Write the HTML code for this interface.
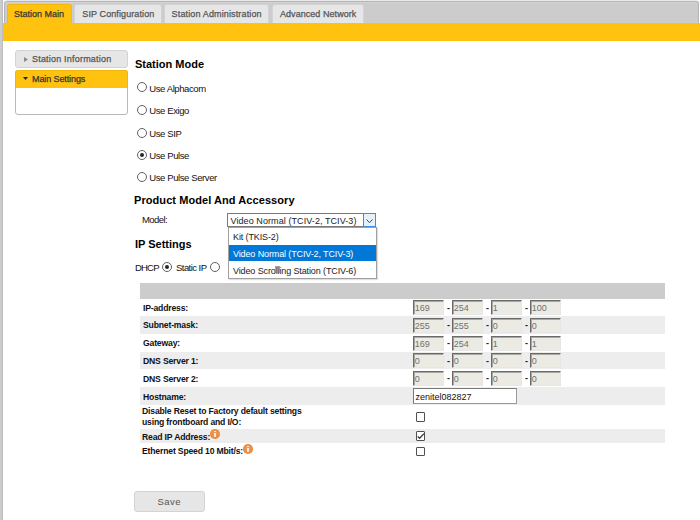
<!DOCTYPE html>
<html><head><meta charset="utf-8">
<style>
*{box-sizing:border-box;margin:0;padding:0}
html,body{width:700px;height:520px;overflow:hidden;background:#fff}
body{position:relative;font-family:"Liberation Sans",sans-serif;color:#222}
.a{position:absolute;white-space:nowrap}
#lbar{left:0;top:0;width:3px;height:520px;background:#cccccc;border-right:1px solid #bdbdbd}
#nav{left:3px;top:0;width:697px;height:24px;background:#fff;border-radius:4px 4px 0 0;box-shadow:inset 0 1px 0 #e9e9e9}
#navin{left:4px;top:1px;width:695px;height:23px;background:#cccccc;border:1px solid #b5b5b5;border-bottom:none;border-radius:3px 3px 0 0;box-shadow:inset 0 1px 0 #d3d3d3}
#nav2{left:698px;top:0;width:2px;height:24px;background:#fff}
#ybar{left:3px;top:23px;width:697px;height:18px;background:#ffc20e}
.tab{top:4px;height:19px;background:#e6e6e6;border:1px solid #d3d3d3;border-bottom:none;border-radius:3px 3px 0 0}
.tab.act{background:#ffc20e;border-color:#f2b90c}
.tt{position:absolute;font-size:9px;color:#555;white-space:nowrap;-webkit-text-stroke:0.25px currentColor}
.acc1{left:15px;top:50px;width:113px;height:18px;background:#e6e6e6;border:1px solid #d3d3d3;border-radius:3px}
.acc2{left:15px;top:70px;width:113px;height:45px;background:#fff;border:1px solid #b9b9b9;border-radius:3px}
.acc2h{left:15px;top:70px;width:113px;height:18px;background:#ffc20e;border:1px solid #f0b70b;border-bottom:none;border-radius:3px 3px 0 0}
.h2{position:absolute;font-size:11px;font-weight:bold;color:#000;white-space:nowrap}
.rl{position:absolute;font-size:9.5px;letter-spacing:-0.4px;color:#111;white-space:nowrap}
.radio{position:absolute;width:10px;height:10px;border:1px solid #606060;border-radius:50%;background:#fff}
.radio.on::after{content:"";position:absolute;left:1.6px;top:1.6px;width:4.8px;height:4.8px;border-radius:50%;background:#262626}
.sel{position:absolute;left:227px;top:213px;width:149px;height:14px;border:1px solid #7a7a7a;background:#fff}
.selbtn{position:absolute;left:363px;top:213px;width:13px;height:14px;border:1px solid #3c8ee6;background:#e5f1fb}
.dd{position:absolute;left:228px;top:227px;width:149px;height:52px;border:1px solid #a0a0a0;background:#fff;box-shadow:1px 1px 1px rgba(0,0,0,0.12)}
.ddt{position:absolute;font-size:9px;letter-spacing:-0.12px;color:#222;white-space:nowrap}
.hl{position:absolute;left:229px;top:245px;width:147px;height:16px;background:#0078d7}
.tr{position:absolute;left:140px;width:525px}
.g{background:#ededed}
.lb{position:absolute;font-size:9.6px;font-weight:bold;letter-spacing:-0.2px;color:#111;white-space:nowrap;transform:scaleX(0.9);transform-origin:0 0}
.ip{position:absolute;width:31px;height:15px;background:#ebebe4;border:1px solid #e6e6e6;border-top-color:#6a6a6a;border-left-color:#6a6a6a;box-shadow:inset 1px 1px 0 #a8a8a0;font-size:9px;color:#707070;line-height:15.5px;padding-left:0.7px}
.dash{position:absolute;font-size:9px;color:#222;font-weight:bold}
.cb{position:absolute;width:9px;height:9.6px;border:1px solid #505050;border-radius:1px;background:#fff}
.info{position:absolute;width:10px;height:10px;border-radius:50%;background:radial-gradient(circle at 50% 45%,#f0a060 0,#e98a3c 60%,#d9772c 100%)}
.info::after{content:"";position:absolute;left:4.3px;top:3.6px;width:1.4px;height:4.4px;background:#fde9da}
.info::before{content:"";position:absolute;left:4.3px;top:1.7px;width:1.4px;height:1.1px;background:#fde9da}
.save{position:absolute;left:134px;top:491px;width:71px;height:21px;background:#e6e6e6;border:1px solid #d3d3d3;border-radius:3px}
</style></head><body>
<div id="lbar" class="a"></div><div id="nav" class="a"></div><div id="navin" class="a"></div><div id="ybar" class="a"></div>
<div class="a tab act" style="left:7px;width:65px"></div>
<div class="tt" style="left:14.1px;top:9px;color:#363636;letter-spacing:0px">Station Main</div>
<div class="a tab" style="left:74px;width:88px"></div>
<div class="tt" style="left:82.3px;top:9px;color:#555;letter-spacing:0.1px">SIP Configuration</div>
<div class="a tab" style="left:164px;width:105px"></div>
<div class="tt" style="left:171.6px;top:9px;color:#555;letter-spacing:0.14px">Station Administration</div>
<div class="a tab" style="left:272px;width:92px"></div>
<div class="tt" style="left:280px;top:9px;color:#555;letter-spacing:0.05px">Advanced Network</div>
<div class="a acc1"></div><div class="a acc2"></div><div class="a acc2h"></div>
<svg class="a" style="left:24px;top:57px" width="4" height="5" viewBox="0 0 4 5"><path d="M0 0 L4 2.5 L0 5Z" fill="#8a8a8a"/></svg>
<div class="tt" style="left:32px;top:54px;letter-spacing:0.2px;color:#555">Station Information</div>
<svg class="a" style="left:23.2px;top:77.3px" width="5" height="3" viewBox="0 0 5 3"><path d="M0 0 L5 0 L2.5 3Z" fill="#1c2340"/></svg>
<div class="tt" style="left:32px;top:74px;color:#363636;letter-spacing:-0.1px">Main Settings</div>
<div class="h2" style="left:135px;top:58px;">Station Mode</div>
<div class="h2" style="left:134px;top:194px;letter-spacing:0.07px">Product Model And Accessory</div>
<div class="h2" style="left:135px;top:238px;">IP Settings</div>
<div class="radio" style="left:137px;top:82px"></div>
<div class="rl" style="left:149.3px;top:82.5px;">Use Alphacom</div>
<div class="radio" style="left:137px;top:105px"></div>
<div class="rl" style="left:149.3px;top:105px;">Use Exigo</div>
<div class="radio" style="left:137px;top:128px"></div>
<div class="rl" style="left:149.3px;top:128px;">Use SIP</div>
<div class="radio on" style="left:137px;top:150px"></div>
<div class="rl" style="left:149.3px;top:150px;">Use Pulse</div>
<div class="radio" style="left:137px;top:172px"></div>
<div class="rl" style="left:149.3px;top:172px;">Use Pulse Server</div>
<div class="rl" style="left:142px;top:214.3px;letter-spacing:-0.58px">Model:</div>
<div class="sel"></div>
<div class="ddt" style="left:230.5px;top:216px;letter-spacing:0.08px">Video Normal (TCIV-2, TCIV-3)</div>
<div class="selbtn"></div>
<svg class="a" style="left:366px;top:218.5px" width="7" height="4.5" viewBox="0 0 7 4.5"><path d="M0.5 0.5 L3.5 3.7 L6.5 0.5" fill="none" stroke="#444" stroke-width="1"/></svg>
<div class="dd"></div>
<div class="ddt" style="left:233px;top:231.5px;">Kit (TKIS-2)</div>
<div class="hl"></div>
<div class="ddt" style="left:233px;top:248.5px;color:#fff">Video Normal (TCIV-2, TCIV-3)</div>
<div class="ddt" style="left:233px;top:265.5px;">Video Scrolling Station (TCIV-6)</div>
<div class="a" style="left:275.3px;top:266.3px;width:4.5px;height:7px;background:rgba(130,130,145,0.75)"></div>
<div class="rl" style="left:135px;top:261.5px;letter-spacing:-0.8px">DHCP</div>
<div class="radio on" style="left:162px;top:262px"></div>
<div class="rl" style="left:176px;top:261.5px;letter-spacing:-0.55px">Static IP</div>
<div class="radio" style="left:210px;top:262px"></div>
<div class="tr" style="top:283px;height:16px;background:#cccccc"></div>
<div class="tr g" style="top:316px;height:18px"></div>
<div class="tr g" style="top:352px;height:17px"></div>
<div class="tr g" style="top:387px;height:18px"></div>
<div class="tr g" style="top:429px;height:14px"></div>
<div class="lb" style="left:143px;top:301.7px;">IP-address:</div>
<div class="lb" style="left:143px;top:319.2px;">Subnet-mask:</div>
<div class="lb" style="left:143px;top:337.2px;">Gateway:</div>
<div class="lb" style="left:143px;top:354.7px;">DNS Server 1:</div>
<div class="lb" style="left:143px;top:372.7px;">DNS Server 2:</div>
<div class="lb" style="left:143px;top:391.2px;">Hostname:</div>
<div class="lb" style="left:142px;top:405.2px;">Disable Reset to Factory default settings</div>
<div class="lb" style="left:142px;top:416.2px;">using frontboard and I/O:</div>
<div class="lb" style="left:142px;top:430.7px;">Read IP Address:</div>
<div class="lb" style="left:142px;top:445.2px;">Ethernet Speed 10 Mbit/s:</div>
<div class="info" style="left:210px;top:429px"></div>
<div class="info" style="left:243px;top:444.3px"></div>
<div class="ip" style="left:413px;top:300px">169</div>
<div class="dash" style="left:447px;top:302.5px">-</div>
<div class="ip" style="left:452px;top:300px">254</div>
<div class="dash" style="left:486px;top:302.5px">-</div>
<div class="ip" style="left:491px;top:300px">1</div>
<div class="dash" style="left:525px;top:302.5px">-</div>
<div class="ip" style="left:530px;top:300px">100</div>
<div class="ip" style="left:413px;top:317.5px">255</div>
<div class="dash" style="left:447px;top:320.0px">-</div>
<div class="ip" style="left:452px;top:317.5px">255</div>
<div class="dash" style="left:486px;top:320.0px">-</div>
<div class="ip" style="left:491px;top:317.5px">0</div>
<div class="dash" style="left:525px;top:320.0px">-</div>
<div class="ip" style="left:530px;top:317.5px">0</div>
<div class="ip" style="left:413px;top:335.5px">169</div>
<div class="dash" style="left:447px;top:338.0px">-</div>
<div class="ip" style="left:452px;top:335.5px">254</div>
<div class="dash" style="left:486px;top:338.0px">-</div>
<div class="ip" style="left:491px;top:335.5px">1</div>
<div class="dash" style="left:525px;top:338.0px">-</div>
<div class="ip" style="left:530px;top:335.5px">1</div>
<div class="ip" style="left:413px;top:353px">0</div>
<div class="dash" style="left:447px;top:355.5px">-</div>
<div class="ip" style="left:452px;top:353px">0</div>
<div class="dash" style="left:486px;top:355.5px">-</div>
<div class="ip" style="left:491px;top:353px">0</div>
<div class="dash" style="left:525px;top:355.5px">-</div>
<div class="ip" style="left:530px;top:353px">0</div>
<div class="ip" style="left:413px;top:370.5px">0</div>
<div class="dash" style="left:447px;top:373.0px">-</div>
<div class="ip" style="left:452px;top:370.5px">0</div>
<div class="dash" style="left:486px;top:373.0px">-</div>
<div class="ip" style="left:491px;top:370.5px">0</div>
<div class="dash" style="left:525px;top:373.0px">-</div>
<div class="ip" style="left:530px;top:370.5px">0</div>
<div class="a" style="left:413px;top:388px;width:104px;height:16px;border:1px solid #7a7a7a;border-right-color:#999;border-bottom-color:#999;background:#fff"></div>
<div class="a" style="left:415.5px;top:391.8px;font-size:9px;color:#111">zenitel082827</div>
<div class="cb" style="left:416px;top:412px"></div>
<div class="cb" style="left:416px;top:431px"></div>
<div class="cb" style="left:416px;top:446.5px"></div>
<svg class="a" style="left:416px;top:431px" width="9" height="10" viewBox="0 0 9 10"><path d="M1.7 5.6 L3.6 7.3 L8 2.6" fill="none" stroke="#3a3a3a" stroke-width="1.3"/></svg>
<div class="save"></div>
<div class="a" style="left:157.5px;top:496px;font-size:9.5px;letter-spacing:0.5px;color:#555">Save</div>
</body></html>
